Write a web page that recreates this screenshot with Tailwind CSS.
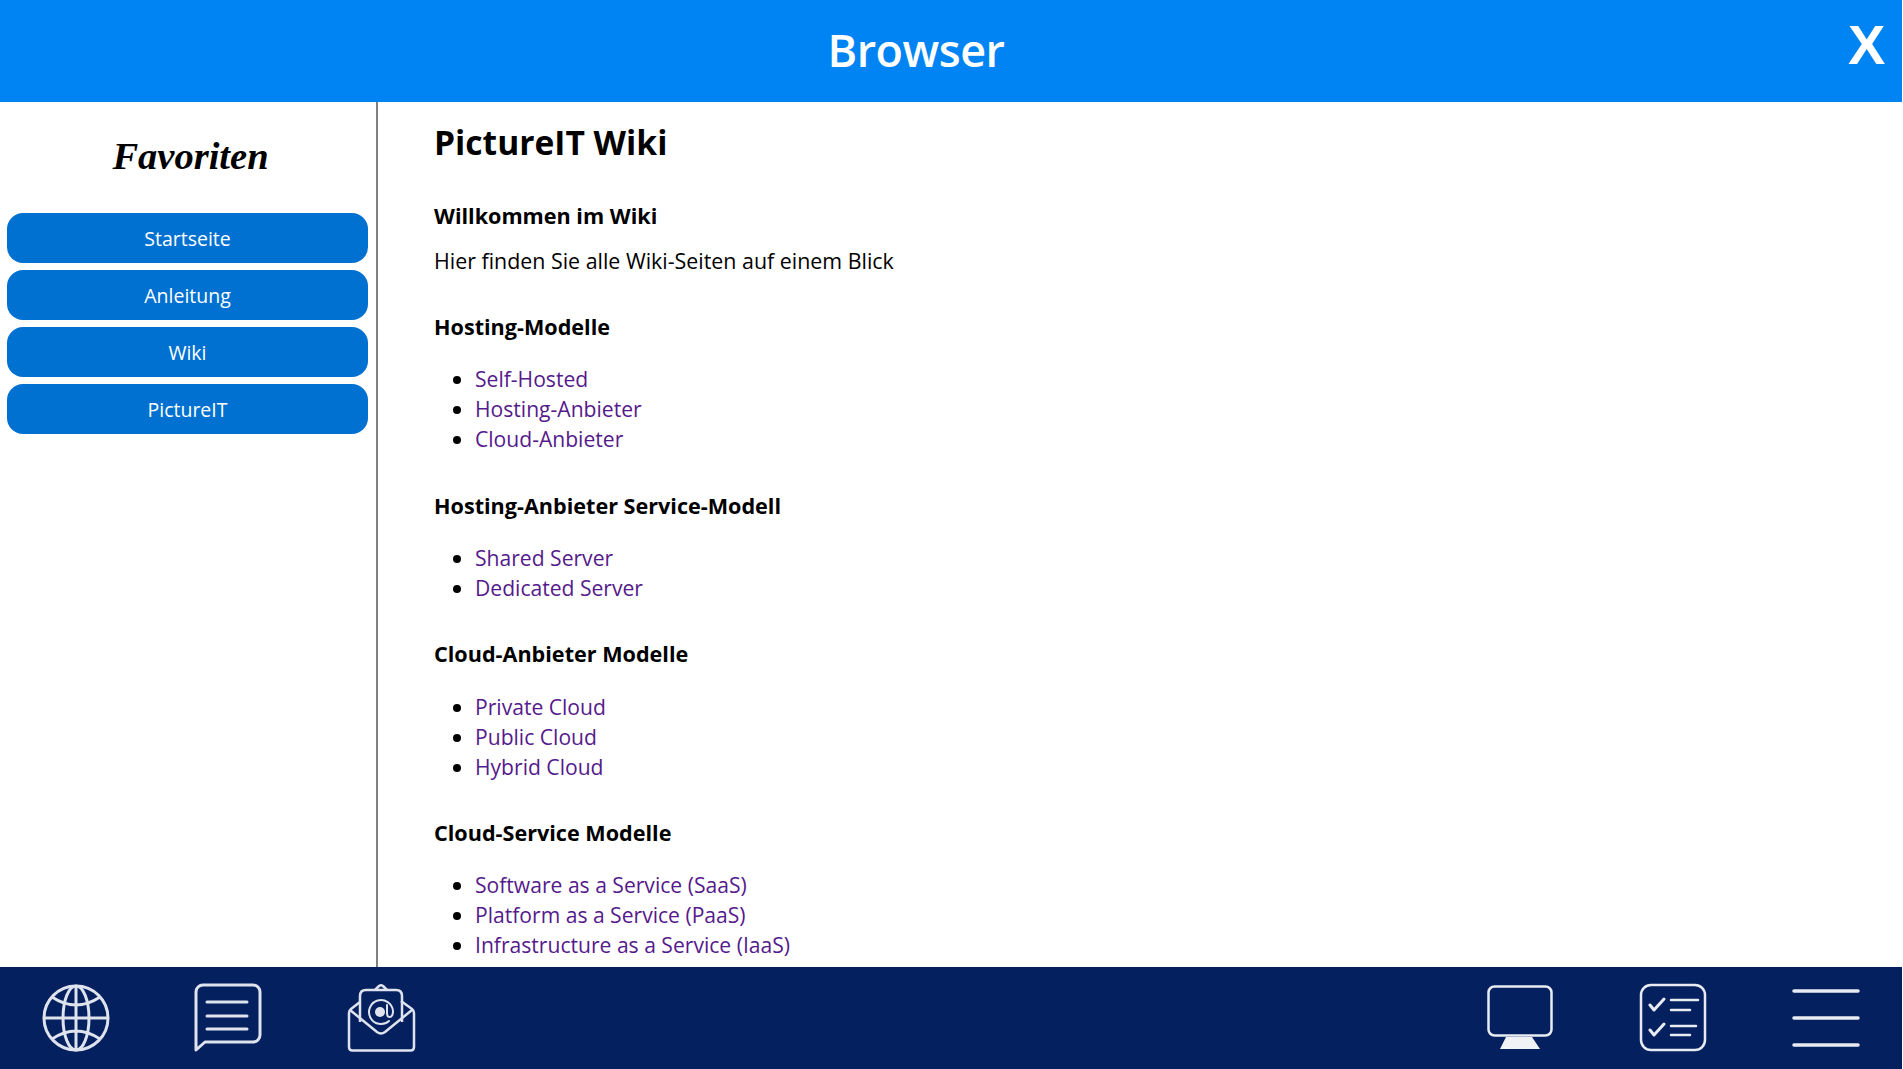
<!DOCTYPE html>
<html lang="de">
<head>
    <meta charset="UTF-8">
    <title>Browser</title>
    <script src="https://cdn.jsdelivr.net/npm/@tailwindcss/browser@4"></script>
</head>
<body class="bg-white overflow-hidden font-['Open_Sans',sans-serif]">
    <div class="w-[1902px] h-[1069px] flex flex-col">
        <!-- Header -->
        <header class="h-[102px] shrink-0 bg-[#0084f4] flex items-center text-white">
            <h1 class="flex-1 text-center text-[45px] font-semibold leading-none tracking-[-0.5px] pb-[3px] pr-[2px]">Browser</h1>
            <button class="w-[68px] text-left pl-[14px] pb-[12px] font-['Liberation_Sans',sans-serif] text-[56px] font-bold leading-none">X</button>
        </header>

        <div class="flex flex-1 min-h-0">
            <!-- Sidebar -->
            <aside class="w-[378px] shrink-0 border-r-2 border-[#808080] px-[7px]">
                <h2 class="h-[111px] flex items-center justify-center pl-[5px] pb-[3px] font-['Liberation_Serif',serif] italic font-bold text-[38.5px] leading-none text-black">Favoriten</h2>
                <nav class="flex flex-col gap-[7px] w-[361px]">
                    <a class="h-[50px] pt-[1px] rounded-[16px] bg-[#0071d1] text-white text-[19.5px] flex items-center justify-center">Startseite</a>
                    <a class="h-[50px] pt-[1px] rounded-[16px] bg-[#0071d1] text-white text-[19.5px] flex items-center justify-center">Anleitung</a>
                    <a class="h-[50px] pt-[1px] rounded-[16px] bg-[#0071d1] text-white text-[19.5px] flex items-center justify-center">Wiki</a>
                    <a class="h-[50px] pt-[1px] rounded-[16px] bg-[#0071d1] text-white text-[19.5px] flex items-center justify-center">PictureIT</a>
                </nav>
            </aside>

            <!-- Content -->
            <main class="flex-1 overflow-hidden pl-[56px] pt-[20px] text-[21.1px] leading-[30px] text-black">
                <h1 class="text-[33.6px] leading-[40px] font-bold mb-[39px]">PictureIT Wiki</h1>
                <h3 class="text-[21.6px] font-bold mb-[15px]">Willkommen im Wiki</h3>
                <p class="text-[21.4px] mb-[36px]">Hier finden Sie alle Wiki-Seiten auf einem Blick</p>

                <h3 class="text-[21.6px] font-bold mb-[22px]">Hosting-Modelle</h3>
                <ul class="list-disc pl-[41px] mb-[37px] text-[#551a8b]">
                    <li class="marker:text-black">Self-Hosted</li>
                    <li class="marker:text-black">Hosting-Anbieter</li>
                    <li class="marker:text-black">Cloud-Anbieter</li>
                </ul>

                <h3 class="text-[21.6px] font-bold mb-[22px]">Hosting-Anbieter Service-Modell</h3>
                <ul class="list-disc pl-[41px] mb-[36px] text-[#551a8b]">
                    <li class="marker:text-black">Shared Server</li>
                    <li class="marker:text-black">Dedicated Server</li>
                </ul>

                <h3 class="text-[21.6px] font-bold mb-[23px]">Cloud-Anbieter Modelle</h3>
                <ul class="list-disc pl-[41px] mb-[36px] text-[#551a8b]">
                    <li class="marker:text-black">Private Cloud</li>
                    <li class="marker:text-black">Public Cloud</li>
                    <li class="marker:text-black">Hybrid Cloud</li>
                </ul>

                <h3 class="text-[21.6px] font-bold mb-[22px]">Cloud-Service Modelle</h3>
                <ul class="list-disc pl-[41px] text-[#551a8b]">
                    <li class="marker:text-black">Software as a Service (SaaS)</li>
                    <li class="marker:text-black">Platform as a Service (PaaS)</li>
                    <li class="marker:text-black">Infrastructure as a Service (IaaS)</li>
                </ul>
            </main>
        </div>

        <!-- Footer -->
        <footer class="h-[102px] shrink-0 bg-[#05205f] flex justify-between items-center">
            <div class="flex">
                <button class="w-[152px] flex justify-center">
                    <svg class="w-[70px] h-[70px]" viewBox="0 0 70 70" fill="none" stroke="#dfe3ee" stroke-width="3">
                        <circle cx="35" cy="35" r="32"/>
                        <ellipse cx="35" cy="35" rx="13" ry="32"/>
                        <path d="M35 3v64M3 35h64M11 14q24 16 48 0M11 56q24-16 48 0"/>
                    </svg>
                </button>
                <button class="w-[152.5px] flex justify-center">
                    <svg class="w-[70px] h-[70px]" viewBox="0 0 70 70" fill="none" stroke="#dfe3ee" stroke-width="3">
                        <path d="M3 67V9a7 7 0 0 1 7-7h50a7 7 0 0 1 7 7v43a7 7 0 0 1-7 7H12z" stroke-linejoin="round"/>
                        <path d="M14 19h40M14 33h40M14 46h40" stroke-linecap="round"/>
                    </svg>
                </button>
                <button class="w-[152.5px] flex justify-center">
                    <svg class="w-[70px] h-[70px]" viewBox="0 0 70 70" fill="none" stroke="#dfe3ee" stroke-width="2.5" stroke-linejoin="round">
                        <path d="M14 19L5 26q-2 1.500-2 4v34q0 3.500 3.500 3.500h58q3.500 0 3.500-3.500V30q0-2.500-2-4l-11-8"/>
                        <path d="M4 27l27 22q4 3 8 0l27-22"/>
                        <path d="M14 39V13q0-6 6-6h30q6 0 6 6v26"/>
                        <path d="M29 7l4-4q2-1.500 4 0l4 4"/>
                        <circle cx="34" cy="29" r="5" fill="#dfe3ee" stroke="none"/>
                        <path d="M43 38a12 12 0 1 1 4-10q0 6-3.500 6-2.500 0-2.500-4v-8" stroke-linecap="round" stroke-width="2"/>
                    </svg>
                </button>
            </div>
            <div class="flex">
                <button class="w-[152.5px] pr-[2px] flex justify-center">
                    <svg class="w-[70px] h-[70px]" viewBox="0 0 70 70" fill="none" stroke="#e8ebf2" stroke-width="2.500">
                        <rect x="3.500" y="3.500" width="63" height="49" rx="6"/>
                        <path d="M21 54h26l8 12H15z" fill="#f0f2f6" stroke="none"/>
                    </svg>
                </button>
                <button class="w-[152.5px] flex justify-center">
                    <svg class="w-[70px] h-[70px]" viewBox="0 0 70 70" fill="none" stroke="#e8ebf2" stroke-width="2.500" stroke-linecap="round" stroke-linejoin="round">
                        <rect x="3" y="2" width="64" height="65" rx="10"/>
                        <path d="M12 22l4 5 10-11M12 47l4 5 10-11" stroke-width="3"/>
                        <path d="M33 17h27M33 27h19M33 43h25M33 52h19"/>
                    </svg>
                </button>
                <button class="w-[152.5px] flex justify-center">
                    <svg class="w-[70px] h-[70px]" viewBox="0 0 70 70" fill="none" stroke="#e8ebf2" stroke-width="3.500" stroke-linecap="round">
                        <path d="M3 8h64M3 35h64M3 62h64"/>
                    </svg>
                </button>
            </div>
        </footer>
    </div>
</body>
</html>
